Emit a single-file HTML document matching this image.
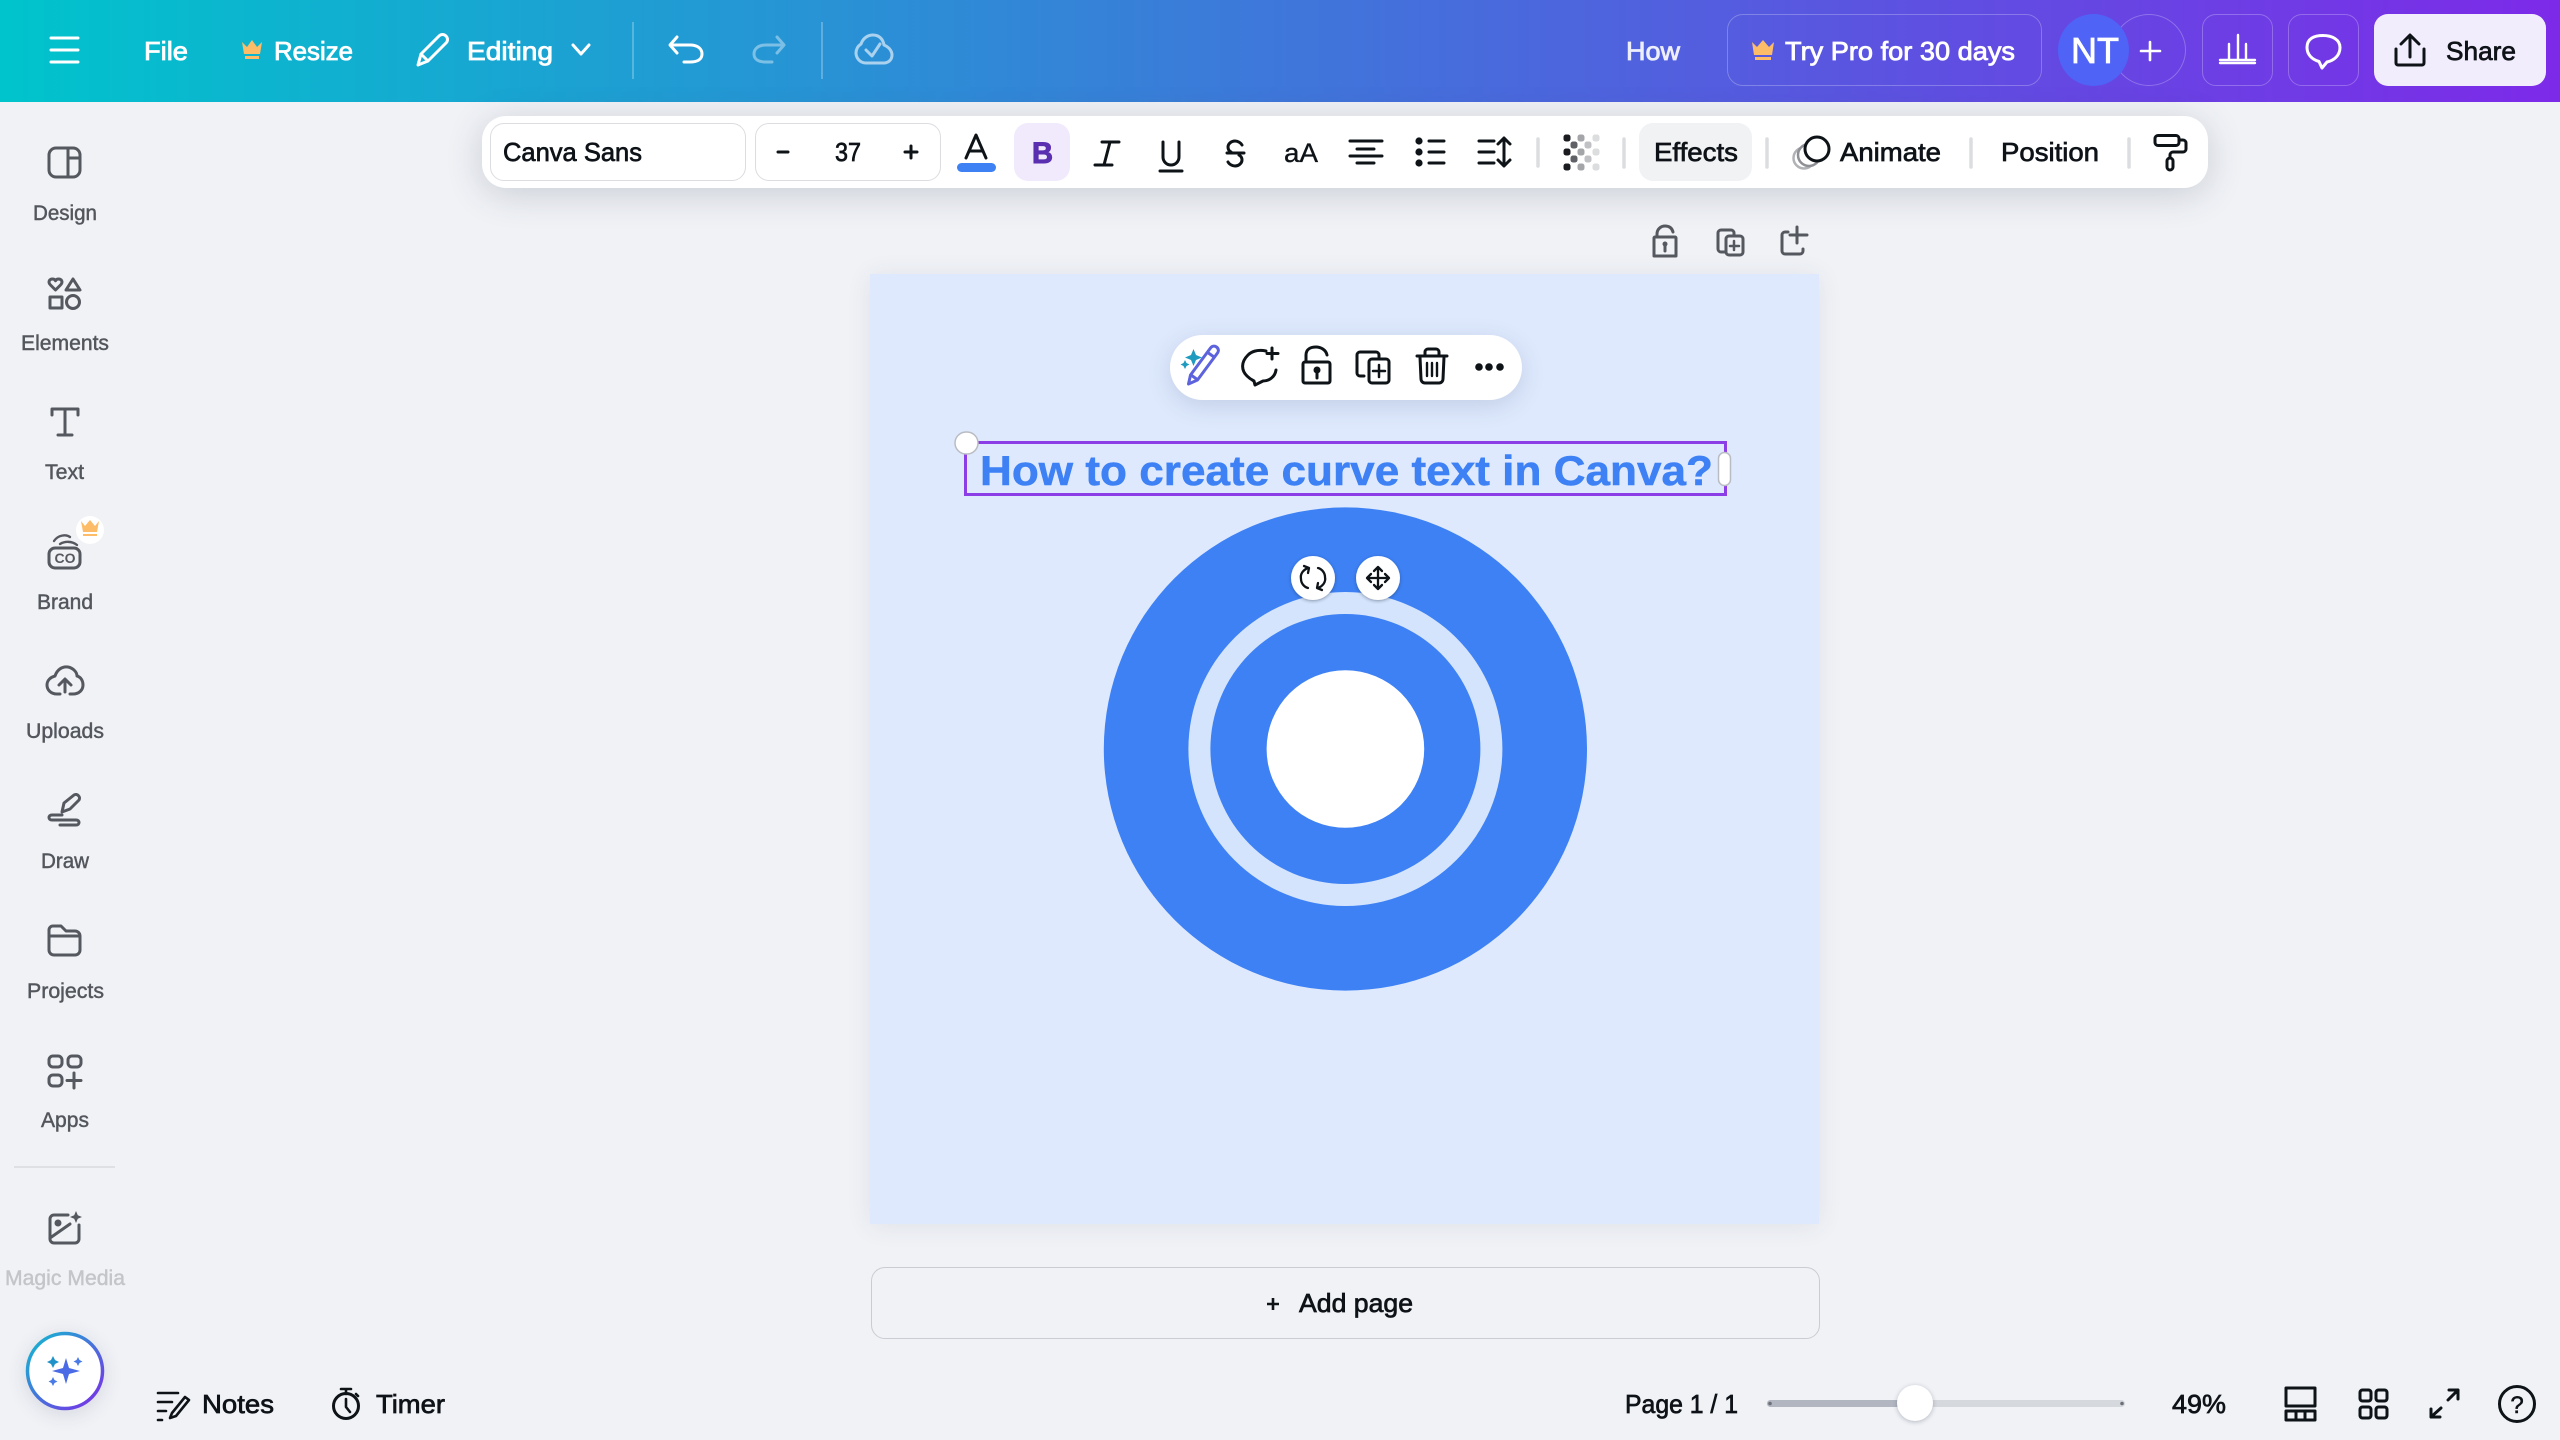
<!DOCTYPE html>
<html lang="en"><head><meta charset="utf-8"><title>How - Canva</title>
<style>
html,body{margin:0;padding:0;width:2560px;height:1440px;overflow:hidden;background:#f0f2f6;font-family:"Liberation Sans",sans-serif}
.a{position:absolute;box-sizing:border-box}
svg{position:absolute;left:0;top:0}
text{font-family:"Liberation Sans",sans-serif}
.w{fill:#fff;stroke:#fff;stroke-width:.8;font-size:26px}
.k{fill:#0e1318;stroke:#0e1318;stroke-width:.7;font-size:26px}
.l{fill:#53565c;stroke:#53565c;stroke-width:.45;font-size:21px}
.i{fill:none;stroke:#0e1318;stroke-width:3;stroke-linecap:round;stroke-linejoin:round}
.g{fill:none;stroke:#55585f;stroke-width:3;stroke-linecap:round;stroke-linejoin:round}
.t{fill:none;stroke:#fff;stroke-width:3;stroke-linecap:round;stroke-linejoin:round}
</style></head><body>
<div class="a" style="left:0;top:0;width:2560px;height:102px;background:linear-gradient(90deg,#00c4cc,#7d2ae8)"></div>
<div class="a" style="left:1727px;top:14px;width:315px;height:72px;border:1.5px solid rgba(255,255,255,.25);border-radius:16px"></div>
<div class="a" style="left:2112px;top:14px;width:74px;height:72px;border:1.5px solid rgba(255,255,255,.25);border-radius:50%"></div>
<div class="a" style="left:2058px;top:14px;width:71px;height:72px;background:#4f63f6;border-radius:50%"></div>
<div class="a" style="left:2202px;top:14px;width:71px;height:72px;border:1.5px solid rgba(255,255,255,.25);border-radius:14px"></div>
<div class="a" style="left:2288px;top:14px;width:71px;height:72px;border:1.5px solid rgba(255,255,255,.25);border-radius:14px"></div>
<div class="a" style="left:2374px;top:14px;width:172px;height:72px;background:#f2edfc;border-radius:14px"></div>
<!-- page -->
<div class="a" style="left:870px;top:274px;width:949px;height:950px;background:#dee9fd;box-shadow:0 2px 24px rgba(60,70,90,.09)"></div>
<!-- toolbar -->
<div class="a" style="left:482px;top:116px;width:1726px;height:72px;background:#fff;border-radius:24px;box-shadow:0 6px 36px rgba(50,60,85,.2)"></div>
<div class="a" style="left:490px;top:123px;width:256px;height:58px;border:1.5px solid #dcdde1;border-radius:14px"></div>
<div class="a" style="left:755px;top:123px;width:186px;height:58px;border:1.5px solid #dcdde1;border-radius:14px"></div>
<div class="a" style="left:1014px;top:123px;width:56px;height:58px;background:#f1eafc;border-radius:14px"></div>
<div class="a" style="left:1639px;top:123px;width:113px;height:58px;background:#f1f2f4;border-radius:14px"></div>
<div class="a" style="left:1170px;top:335px;width:352px;height:65px;background:#fff;border-radius:33px;box-shadow:0 6px 24px rgba(50,70,110,.16)"></div>
<!-- add page -->
<div class="a" style="left:871px;top:1267px;width:949px;height:72px;border:1.5px solid #c9ccd2;border-radius:14px"></div>
<!-- slider -->
<div class="a" style="left:1767px;top:1400px;width:358px;height:7px;background:#d5d8dd;border-radius:4px"></div>
<div class="a" style="left:1767px;top:1400px;width:148px;height:7px;background:#b1b6c1;border-radius:4px"></div>
<div class="a" style="left:1897px;top:1385px;width:36px;height:36px;background:#fff;border-radius:50%;box-shadow:0 1px 5px rgba(40,50,70,.3)"></div>
<div class="a" style="left:26px;top:1332px;width:78px;height:78px;background:#fff;border-radius:50%;box-shadow:0 4px 20px rgba(50,60,90,.14)"></div>

<svg width="2560" height="1440" viewBox="0 0 2560 1440" xmlns="http://www.w3.org/2000/svg">
<defs>
<linearGradient id="rg" x1="0" y1="0" x2="1" y2="1"><stop offset="0" stop-color="#10bccf"/><stop offset="1" stop-color="#7d2ae8"/></linearGradient>
<filter id="hs" x="-30%" y="-30%" width="160%" height="160%"><feDropShadow dx="0" dy="1" stdDeviation="1.5" flood-color="#202a40" flood-opacity=".45"/></filter>
</defs>

<!-- Top bar -->
<path class="t" d="M51 38H78M51 50H78M51 62H78"/>
<text class="w" x="144" y="60" textLength="44" lengthAdjust="spacingAndGlyphs">File</text>
<path fill="#fdbc68" d="M242 42l5 5 5-7 5 7 5-5-2 12h-16zM245 56h14v3h-14z"/>
<text class="w" x="274" y="60" textLength="79" lengthAdjust="spacingAndGlyphs">Resize</text>
<path class="t" d="M418 65l3-11 18-18c2-2 5-2 7 0s2 5 0 7l-18 18zM421 54l7 7"/>
<text class="w" x="467" y="60" textLength="86" lengthAdjust="spacingAndGlyphs">Editing</text>
<path class="t" d="M573 45l8 9 8-9"/>
<path d="M633 22V79M822 22V79" stroke="#fff" stroke-opacity=".25" stroke-width="2"/>
<path class="t" d="M677 37l-7 8 7 8M671 45H690C698 45 702 49 702 54S698 62 690 62H684"/>
<path class="t" style="opacity:.4" d="M777 37l7 8-7 8M783 45H766C758 45 754 49 754 54S758 62 766 62H772"/>
<path class="t" style="opacity:.6" d="M866 63C860 63 856 58 856 53 856 49 858 46 861 44 863 38 868 35 873 35 879 35 883 39 884 45 889 47 892 51 892 55 892 60 888 63 884 63ZM866 50l6 6 8-12"/>
<text class="w" x="1626" y="60" textLength="54" lengthAdjust="spacingAndGlyphs" style="opacity:.9">How</text>
<path fill="#fdbc68" d="M1752 42l5 5 6-7 6 7 5-5-2 13h-18zM1755 57h16v3h-16z"/>
<text class="w" x="1785" y="60" textLength="230" lengthAdjust="spacingAndGlyphs">Try Pro for 30 days</text>
<text x="2071" y="63" textLength="48" lengthAdjust="spacingAndGlyphs" fill="#fff" stroke="#fff" stroke-width=".8" font-size="36">NT</text>
<path class="t" style="stroke-width:2.6" d="M2150 42V60M2141 51H2160"/>
<path class="t" style="stroke-width:2.4" d="M2229 60V44M2238 60V35M2246 60V44M2220 60H2255M2220 63H2255"/>
<path class="t" d="M2322 68l-3-6.500c-7-2-12-7-12-14 0-9 7-12 16-12s17 4 17 12c0 8-6 13-13 14.500z"/>
<path class="i" d="M2410 57V36M2401 44l9-9 9 9M2396 49V63a2 2 0 0 0 2 2H2422a2 2 0 0 0 2-2V49"/>
<text class="k" x="2446" y="60" textLength="70" lengthAdjust="spacingAndGlyphs">Share</text>

<!-- Toolbar -->
<text class="k" x="503" y="161" textLength="139" lengthAdjust="spacingAndGlyphs">Canva Sans</text>
<path d="M778 152H788M905 152H917M911 146V158" stroke="#0e1318" stroke-width="3" stroke-linecap="round"/>
<text class="k" x="835" y="161" textLength="26" lengthAdjust="spacingAndGlyphs">37</text>
<path class="i" d="M966 158l10-23 10 23M970 151H982"/>
<rect x="957" y="163" width="39" height="9" rx="4.500" fill="#3d81f5"/>
<text x="1032" y="163" textLength="21" lengthAdjust="spacingAndGlyphs" fill="#5a2fb0" stroke="#5a2fb0" stroke-width="1" font-size="30" font-weight="700">B</text>
<path class="i" d="M1102 142H1119M1095 165H1112M1110 142L1104 165"/>
<path class="i" d="M1163 142V157a8 8 0 0 0 16 0V142M1160 171H1182"/>
<path class="i" d="M1242 145c-1-2-4-4-7-4-4 0-7 3-7 6 0 2 1 4 3 5M1227 153H1244M1239 155c2 1 3 3 3 5 0 3-3 6-7 6-3 0-6-2-7-4"/>
<text class="k" x="1284" y="162" textLength="34" lengthAdjust="spacingAndGlyphs" style="font-size:27px;stroke-width:.35">aA</text>
<path class="i" d="M1350 141H1382M1357 149H1374M1350 156H1382M1357 163H1374"/>
<circle cx="1419" cy="141" r="3.600" fill="#0e1318"/><circle cx="1419" cy="152" r="3.600" fill="#0e1318"/><circle cx="1419" cy="163" r="3.600" fill="#0e1318"/>
<path class="i" d="M1429 141H1444M1429 152H1444M1429 163H1444"/>
<path class="i" d="M1479 141H1494M1479 152H1494M1479 163H1494M1504 138V166M1498 144l6-6 6 6M1498 160l6 6 6-6"/>
<g fill="#1a1c20"><rect x="1563.500" y="134.500" width="7" height="7" rx="2.500"/><rect x="1563.500" y="148.500" width="7" height="7" rx="2.500"/><rect x="1563.500" y="163.500" width="7" height="7" rx="2.500"/></g>
<g fill="#5f6166"><rect x="1570.500" y="141.500" width="7" height="7" rx="2.500"/><rect x="1570.500" y="155.500" width="7" height="7" rx="2.500"/></g>
<g fill="#a4a5a8"><rect x="1577.500" y="134.500" width="7" height="7" rx="2.500"/><rect x="1577.500" y="148.500" width="7" height="7" rx="2.500"/><rect x="1577.500" y="163.500" width="7" height="7" rx="2.500"/></g>
<g fill="#c0c1c4"><rect x="1584.500" y="141.500" width="7" height="7" rx="2.500"/><rect x="1584.500" y="155.500" width="7" height="7" rx="2.500"/></g>
<g fill="#dcdddf"><rect x="1592.500" y="134.500" width="7" height="7" rx="2.500"/><rect x="1592.500" y="148.500" width="7" height="7" rx="2.500"/><rect x="1592.500" y="163.500" width="7" height="7" rx="2.500"/></g>
<path d="M1538 139V166M1624 139V167M1767 139V167M1971 139V167M2129 139V167" stroke="#dcdde1" stroke-width="3.500" stroke-linecap="round"/>
<text class="k" x="1654" y="161" textLength="84" lengthAdjust="spacingAndGlyphs">Effects</text>
<circle cx="1804" cy="158" r="10.500" fill="none" stroke="#b0b2b6" stroke-width="2.500"/>
<circle cx="1809" cy="155" r="11" fill="#fff" stroke="#8e9095" stroke-width="2.500"/>
<circle cx="1817" cy="149" r="12" fill="#fff" stroke="#0e1318" stroke-width="3"/>
<text class="k" x="1840" y="161" textLength="101" lengthAdjust="spacingAndGlyphs">Animate</text>
<text class="k" x="2001" y="161" textLength="98" lengthAdjust="spacingAndGlyphs">Position</text>
<rect class="i" x="2155" y="135.500" width="24" height="10" rx="3"/>
<path class="i" d="M2180 140H2183a3 3 0 0 1 3 3V149a3 3 0 0 1-3 3H2173a3 3 0 0 0-3 3V158"/>
<rect class="i" x="2167" y="158" width="6" height="12" rx="3"/>

<!-- icons above page -->
<path class="g" d="M1655 237H1675a1 1 0 0 1 1 1V256H1654V238a1 1 0 0 1 1-1ZM1657 236V234C1657 229 1661 226 1665 226S1672 228 1673 232"/>
<circle cx="1665" cy="244" r="2.500" fill="#55585f"/><path class="g" d="M1665 245V251"/>
<path class="g" d="M1725 252H1721a3 3 0 0 1-3-3V233a3 3 0 0 1 3-3H1731a3 3 0 0 1 3 3V236"/>
<rect class="g" x="1726" y="236" width="17" height="19" rx="3"/><path class="g" style="stroke-width:2.500" d="M1734 241V250M1730 246H1739"/>
<path class="g" d="M1788 232H1785a3 3 0 0 0-3 3V251a3 3 0 0 0 3 3H1800a3 3 0 0 0 3-3V249M1797 227V243M1790 235H1807"/>

<!-- Design -->
<circle cx="1345.400" cy="749" r="241.600" fill="#3d81f5"/>
<circle cx="1345.400" cy="749" r="157" fill="#d4e4fc"/>
<circle cx="1345.400" cy="749" r="135" fill="#3d81f5"/>
<circle cx="1345.400" cy="749" r="78.800" fill="#fff"/>
<text x="980" y="485" textLength="733" lengthAdjust="spacingAndGlyphs" fill="#3d81f5" stroke="#3d81f5" stroke-width=".5" font-size="42" font-weight="700">How to create curve text in Canva?</text>
<rect x="965.500" y="442.500" width="760" height="52" fill="none" stroke="#8b3de6" stroke-width="3"/>
<rect x="955" y="432" width="23" height="22" rx="11" fill="#fff" stroke="#b9bcc2" stroke-width="1.500"/>
<rect x="1718.500" y="452.500" width="12" height="33" rx="6" fill="#fff" stroke="#b9bcc2" stroke-width="1.500"/>
<circle cx="1313" cy="578" r="22" fill="#fff" filter="url(#hs)"/>
<circle cx="1378" cy="578" r="22" fill="#fff" filter="url(#hs)"/>
<path class="i" style="stroke-width:2.300" d="M1308 568c-5 2-8 6-7 11 0 4 3 8 7 9M1318 588c5-2 8-6 7-11 0-4-3-8-7-9M1304 566l5 2-1 5M1322 590l-5-2 1-5"/>
<path class="i" style="stroke-width:2.300" d="M1378 568V588M1368 578H1388M1374 571l4-4 4 4M1374 585l4 4 4-4M1371 574l-4 4 4 4M1385 574l4 4-4 4"/>

<!-- Floating -->
<path fill="none" stroke="#5d63dd" stroke-width="3" stroke-linejoin="round" d="M1188.500 384l2-9 20-27c1.500-2 4-2.500 6-1s2.500 4 1 6l-20 27zM1191 375l7 5M1207 352l7 5"/>
<path fill="#1f9bc0" d="M1193.500 349l2.500 6 6 2.500-6 2.500-2.500 6-2.500-6-6-2.500 6-2.500zM1185 360l1.500 3 3 1.500-3 1.500-1.500 3-1.500-3-3-1.500 3-1.500z"/>
<path class="i" d="M1266 351C1257 349 1251 352 1248 355 1241 362 1241 370 1247 376 1249 378 1252 380 1254 381L1255 385 1263 381C1269 381 1275 377 1276 370"/>
<path class="i" d="M1272 348V359M1267 353.500H1278"/>
<rect class="i" x="1303" y="362" width="27" height="21" rx="2"/>
<path class="i" d="M1306 362V355C1306 349 1311 347 1316 347 1321 347 1326 350 1327 355"/>
<circle cx="1317" cy="370" r="3.500" fill="#0e1318"/><path class="i" d="M1317 371V378"/>
<path class="i" d="M1364 376H1360a3 3 0 0 1-3-3V355a3 3 0 0 1 3-3H1376a3 3 0 0 1 3 3V357"/>
<rect class="i" x="1369" y="359" width="20" height="24" rx="3"/><path class="i" style="stroke-width:2.500" d="M1379 365V377M1373 371H1385"/>
<path class="i" d="M1417 356H1447M1425 356V352a3 3 0 0 1 3-3H1436a3 3 0 0 1 3 3V356M1420 357L1421 379a4 4 0 0 0 4 4H1439a4 4 0 0 0 4-4L1444 357"/>
<path class="i" style="stroke-width:2.400" d="M1427 363V376M1432 363V376M1437 363V376"/>
<circle cx="1479" cy="367" r="3.800" fill="#0e1318"/><circle cx="1489" cy="367" r="3.800" fill="#0e1318"/><circle cx="1500" cy="367" r="3.800" fill="#0e1318"/>

<!-- Sidebar -->
<path class="g" d="M56 148H73a7 7 0 0 1 7 7V170a7 7 0 0 1-7 7H56a7 7 0 0 1-7-7V155a7 7 0 0 1 7-7ZM68 148V177M68 158H80"/>
<text class="l" x="33" y="220" textLength="64" lengthAdjust="spacingAndGlyphs">Design</text>
<path class="g" d="M55.500 290l-5-5c-3-3-1-6 2-6 1.500 0 2.500.7 3 1.800.5-1.100 1.500-1.800 3-1.800 3 0 5 3 2 6z"/>
<path class="g" d="M66 290L73 279 80 290Z"/><rect class="g" x="50" y="297" width="12" height="11"/><circle class="g" cx="73" cy="302" r="6.500"/>
<text class="l" x="21" y="350" textLength="88" lengthAdjust="spacingAndGlyphs">Elements</text>
<path class="g" d="M52 415V409H78V415M65 409V435M58 435H72"/>
<text class="l" x="45" y="479" textLength="39" lengthAdjust="spacingAndGlyphs">Text</text>
<rect class="g" x="49" y="548" width="31" height="20" rx="6"/>
<path class="g" style="stroke-width:2.400" d="M54 541C58 535 66 534 70 537M60 544C65 541 72 541 77 545"/>
<text x="65" y="563" text-anchor="middle" font-size="14" font-weight="700" fill="#55585f">CO</text>
<circle cx="90" cy="530" r="14" fill="#fff"/>
<path fill="#fdbc68" d="M81 521l4 5 5-6 5 6 4-5-2 11H83zM83 534h14v2H83z"/>
<text class="l" x="37" y="609" textLength="56" lengthAdjust="spacingAndGlyphs">Brand</text>
<path class="g" d="M60 694H57C51 694 47 690 47 685 47 680 51 677 55 676 57 670 62 666 68 667 73 668 77 672 77 676 81 677 83 681 83 685 83 690 79 694 73 694H70M65 692V680M59 685L65 679 71 685"/>
<text class="l" x="26" y="738" textLength="78" lengthAdjust="spacingAndGlyphs">Uploads</text>
<path class="g" d="M62 812L64 803 74 795C77 793 81 797 79 800L70 809ZM62 815H52C48 815 48 820 52 820H76C80 820 80 825 76 825H60"/>
<text class="l" x="41" y="868" textLength="48" lengthAdjust="spacingAndGlyphs">Draw</text>
<path class="g" d="M49 932V930a4 4 0 0 1 4-4H61L66 931H75a5 5 0 0 1 5 5V950a5 5 0 0 1-5 5H54a5 5 0 0 1-5-5ZM49 936H80"/>
<text class="l" x="27" y="998" textLength="77" lengthAdjust="spacingAndGlyphs">Projects</text>
<rect class="g" x="49" y="1056" width="13" height="11" rx="4"/><rect class="g" x="68" y="1056" width="13" height="11" rx="4"/><rect class="g" x="49" y="1075" width="13" height="11" rx="4"/><path class="g" d="M74 1073V1088M67 1080.500H81"/>
<text class="l" x="41" y="1127" textLength="48" lengthAdjust="spacingAndGlyphs">Apps</text>
<path d="M14 1167H115" stroke="#d8dade" stroke-width="1.500"/>
<path class="g" d="M68 1215H54a4 4 0 0 0-4 4V1239a4 4 0 0 0 4 4H75a4 4 0 0 0 4-4V1225M50 1238L70 1224"/>
<circle cx="58" cy="1223" r="3.500" fill="#55585f"/>
<path fill="#55585f" d="M76 1211l1.800 4.200 4.200 1.800-4.200 1.800-1.800 4.200-1.800-4.200-4.200-1.800 4.200-1.800z"/>
<text class="l" x="5" y="1285" textLength="120" lengthAdjust="spacingAndGlyphs" style="fill:#c4c5c9;stroke:#c4c5c9">Magic Media</text>
<circle cx="65" cy="1371" r="37.500" fill="#fff" stroke="url(#rg)" stroke-width="3.500"/>
<path fill="#4a6ae6" d="M66 1358l3 10 11 3-11 3-3 10-3-10-11-3 11-3z"/>
<path fill="#1f93c9" d="M53 1356l2 4 4 2-4 2-2 4-2-4-4-2 4-2z"/>
<path fill="#4a7ae6" d="M78 1357l1.500 3 3 1.500-3 1.500-1.500 3-1.500-3-3-1.500 3-1.500zM53 1377l1.500 3 3 1.500-3 1.500-1.500 3-1.500-3-3-1.500 3-1.500z"/>

<!-- Add page -->
<path d="M1273 1298V1310M1267 1304H1279" stroke="#0e1318" stroke-width="2.600"/>
<text class="k" x="1299" y="1312" textLength="114" lengthAdjust="spacingAndGlyphs">Add page</text>

<!-- Bottom -->
<path class="i" style="stroke-width:2.600" d="M158 1393H178M158 1402H172M158 1411H166M158 1420H162"/>
<path class="i" style="stroke-width:2.600" d="M170 1418L172 1413 185 1397 189 1400 176 1416Z"/>
<text class="k" x="202" y="1413" textLength="72" lengthAdjust="spacingAndGlyphs">Notes</text>
<circle class="i" cx="346" cy="1406" r="12.500"/>
<path class="i" style="stroke-width:2.600" d="M341 1389H351M346 1394V1390M346 1399V1407L350 1412M356 1394L358 1396"/>
<text class="k" x="376" y="1413" textLength="69" lengthAdjust="spacingAndGlyphs">Timer</text>
<text class="k" x="1625" y="1413" textLength="113" lengthAdjust="spacingAndGlyphs">Page 1 / 1</text>
<circle cx="1770" cy="1403.500" r="1.800" fill="#6d7078"/><circle cx="2122" cy="1403.500" r="1.800" fill="#6d7078"/>
<text class="k" x="2172" y="1413" textLength="54" lengthAdjust="spacingAndGlyphs">49%</text>
<path class="i" d="M2286 1388H2315V1406H2286ZM2286 1411H2315V1420H2286ZM2296 1411V1420M2305 1411V1420"/>
<rect class="i" x="2360" y="1390" width="11" height="11" rx="2.500"/><rect class="i" x="2376" y="1390" width="11" height="11" rx="2.500"/><rect class="i" x="2360" y="1407" width="11" height="11" rx="2.500"/><rect class="i" x="2376" y="1407" width="11" height="11" rx="2.500"/>
<path class="i" d="M2449 1390H2458V1399M2458 1390L2448 1400M2431 1409V1417H2440M2431 1417L2441 1408"/>
<circle class="i" cx="2517" cy="1404" r="17.500"/>
<text x="2517" y="1413" text-anchor="middle" font-size="24" fill="#0e1318" stroke="#0e1318" stroke-width=".5">?</text>
</svg>
</body></html>
